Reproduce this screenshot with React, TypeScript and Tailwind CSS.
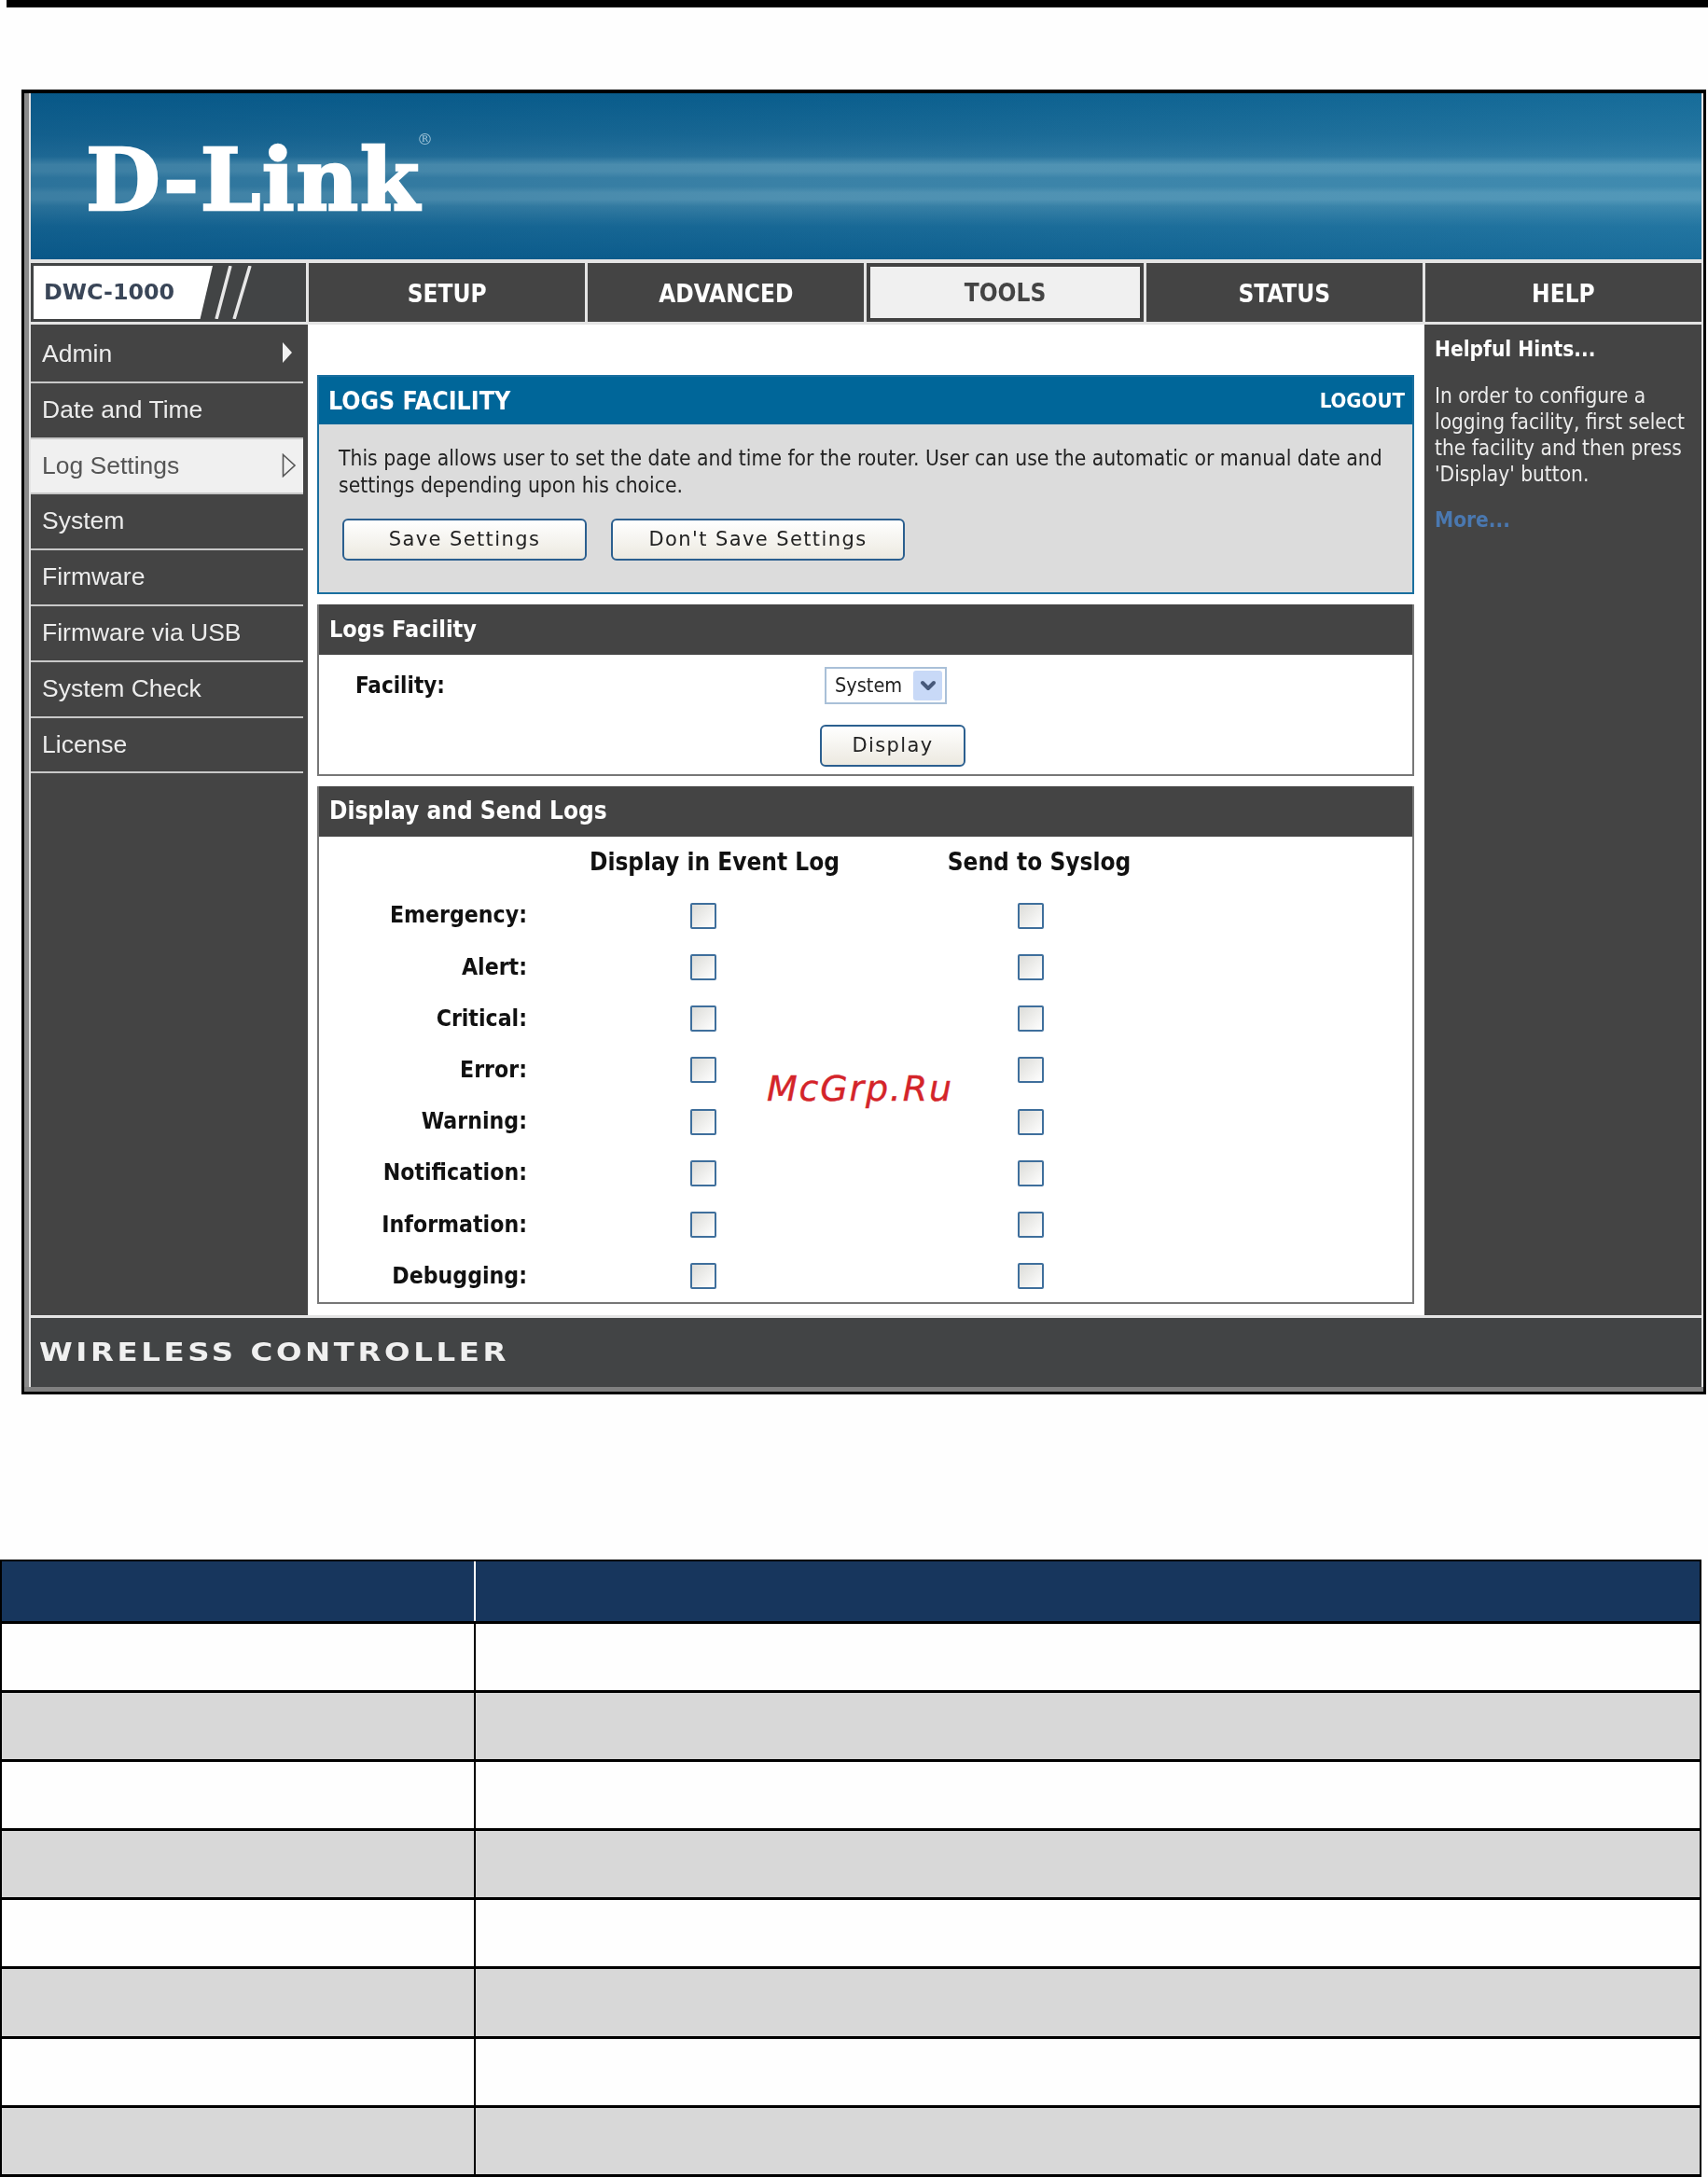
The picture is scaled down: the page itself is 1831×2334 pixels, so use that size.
import { ChevronDown } from 'lucide-react';

const sideItems = ['Admin', 'Date and Time', 'Log Settings', 'System', 'Firmware', 'Firmware via USB', 'System Check', 'License'];
const navItems = ['SETUP', 'ADVANCED', 'TOOLS', 'STATUS', 'HELP'];
const levels = ['Emergency:', 'Alert:', 'Critical:', 'Error:', 'Warning:', 'Notification:', 'Information:', 'Debugging:'];
const tableRows = [0, 1, 2, 3, 4, 5, 6, 7];

function Checkbox() {
  return <span className="block w-[28px] h-[28px] rounded-[2px] border-2 border-[#3f6f9c] bg-[linear-gradient(135deg,#dcdcd8,#ffffff)]" />;
}

function PageButton({ label, width }: { label: string; width: string }) {
  return (
    <button className={`${width} h-[45px] pt-[1px] rounded-[6px] border-2 border-[#2b5f8f] bg-[linear-gradient(180deg,#ffffff,#ece9e0)] font-['DejaVu_Sans',sans-serif] text-[21px] tracking-[1.4px] text-[#222]`}>
      {label}
    </button>
  );
}

function SectionHeader({ title, size }: { title: string; size: string }) {
  return (
    <div className={`h-[54px] flex items-center pl-[11px] bg-[#444444] text-white font-bold ${size}`}>
      {title}
    </div>
  );
}

export default function App() {
  return (
    <div className="relative w-[1831px] h-[2334px] overflow-hidden bg-[#fefefe] font-['DejaVu_Sans_Condensed','DejaVu_Sans',sans-serif]">
      <div className="ml-[7px] h-[8px] bg-black" />

      {/* router screenshot */}
      <div className="mt-[88px] ml-[23px] w-[1806px] h-[1399px] flex flex-col border-t-4 border-x-[3px] border-b-[3px] border-black bg-[#d6d6d6]">
        <div className="flex-1 flex flex-col border-l-[5px] border-[#8a8a8a] pl-[2px] pr-[2px] bg-[#e4e4e4] blur-[0.5px]">
          <div className="relative h-[178px] shrink-0 bg-[linear-gradient(90deg,rgba(0,70,120,.3)_0%,rgba(0,70,120,.08)_45%,rgba(70,160,200,.2)_100%),linear-gradient(180deg,#0a5f8e_0%,#1a6a96_25%,#2a769f_38%,#5596b5_43%,#5596b5_47%,#3f86aa_51%,#3f86aa_56%,#5596b5_60%,#5596b5_64%,#3a82a7_68%,#1a6b98_80%,#0d5f8f_100%)]">
            <div className="absolute left-[59px] top-[37px] flex items-start text-white font-['DejaVu_Serif',serif] font-bold text-[92px] leading-[112px] tracking-[1.5px] [-webkit-text-stroke:2.5px_white]">
              D-Link
              <span className="mt-[2px] -ml-[4px] text-[17px] leading-[20px] font-normal text-[#9fc4d8] [-webkit-text-stroke:0px_white]">®</span>
            </div>
          </div>

          <div className="h-[63px] mt-[4px] shrink-0 flex gap-[3px]">
            <div className="relative w-[295px] bg-[#424445] p-[3px]">
              <div className="w-[192px] h-[57px] flex items-center pl-[11px] bg-white [clip-path:polygon(0_0,100%_0,93%_100%,0_100%)] font-['DejaVu_Sans',sans-serif] font-bold text-[23.8px] text-[#3a4658]">
                DWC-1000
              </div>
              <svg className="absolute left-[190px] top-[3px]" width="50" height="57" viewBox="0 0 50 57">
                <path d="M24 0 L9 57 M45 0 L28 57" stroke="#e8e8e8" strokeWidth="3.5" fill="none" />
              </svg>
            </div>
            {navItems.map((item) =>
              item === 'TOOLS' ? (
                <div key={item} className="flex-1 flex bg-[#424242]">
                  <div className="flex-1 m-[4px] pt-[1px] flex items-center justify-center bg-[#f0f0f0] font-bold text-[26px] text-[#444]">{item}</div>
                </div>
              ) : (
                <div key={item} className="flex-1 pt-[3px] flex items-center justify-center bg-[#444444] font-bold text-[26px] text-white">
                  {item}
                </div>
              ),
            )}
          </div>

          <div className="h-[1062px] mt-[3px] shrink-0 flex">
            <aside className="w-[297px] shrink-0 bg-[#444444] font-['Liberation_Sans',sans-serif] text-[26.5px]">
              <div className="w-[292px] pt-[3px]">
                {sideItems.map((item) => (
                  <div
                    key={item}
                    className={`relative h-[59.8px] flex items-center pl-[12px] border-b-2 border-[#c8c8c8] ${item === 'Log Settings' ? 'bg-[#f0f0f0] text-[#555]' : 'text-[#ececec]'}`}
                  >
                    {item}
                    {item === 'Admin' && (
                      <svg className="absolute left-[270px] top-[16px]" width="10" height="22" viewBox="0 0 10 22">
                        <path d="M0 0 L10 11 L0 22 Z" fill="#f2f2f2" />
                      </svg>
                    )}
                    {item === 'Log Settings' && (
                      <svg className="absolute left-[269px] top-[15px]" width="16" height="26" viewBox="0 0 16 26">
                        <path d="M1.5 1.5 L14 13 L1.5 24.5 Z" fill="none" stroke="#555" strokeWidth="1.6" />
                      </svg>
                    )}
                  </div>
                ))}
              </div>
            </aside>

            <main className="w-[1197px] shrink-0 bg-white pt-[54px] pl-[10px] pr-[11px] flex flex-col gap-[11px]">
              <section className="h-[235px] flex flex-col border-2 border-[#1a6f9f] bg-[#dcdcdc]">
                <div className="h-[51px] flex items-center justify-between pl-[10px] pr-[8px] bg-[#006699] text-white font-bold">
                  <span className="text-[26.5px]">LOGS FACILITY</span>
                  <span className="text-[22px]">LOGOUT</span>
                </div>
                <p className="pt-[22px] pl-[21px] text-[22.7px] leading-[29px] text-[#222]">
                  This page allows user to set the date and time for the router. User can use the automatic or manual date and
                  <br />
                  settings depending upon his choice.
                </p>
                <div className="mt-[21px] ml-[25px] flex gap-[26px]">
                  <PageButton label="Save Settings" width="w-[262px]" />
                  <PageButton label="Don't Save Settings" width="w-[315px]" />
                </div>
              </section>

              <section className="h-[184px] flex flex-col border-2 border-t-0 border-[#777]">
                <SectionHeader title="Logs Facility" size="text-[25px]" />
                <div className="flex items-center pt-[13px] pl-[39px]">
                  <span className="w-[503px] font-bold text-[24px] text-[#111]">Facility:</span>
                  <div className="relative w-[131px] h-[40px] flex items-center pl-[9px] border-2 border-[#a9c0d8] bg-white text-[21.5px] text-[#222]">
                    System
                    <span className="absolute right-[3px] top-[2px] w-[31px] h-[32px] flex items-center justify-center rounded-[3px] bg-[#c8d9f7]">
                      <ChevronDown size={24} strokeWidth={4} className="text-[#47597a]" />
                    </span>
                  </div>
                </div>
                <div className="mt-[22px] ml-[537px]">
                  <PageButton label="Display" width="w-[156px]" />
                </div>
              </section>

              <section className="h-[555px] flex flex-col border-2 border-t-0 border-[#777]">
                <SectionHeader title="Display and Send Logs" size="text-[26px]" />
                <div className="h-[58px] pb-[1px] grid grid-cols-[223px_378px_324px] items-center font-bold text-[26px] text-[#111]">
                  <span />
                  <span className="pl-[24px] text-center">Display in Event Log</span>
                  <span className="pl-[18px] text-center">Send to Syslog</span>
                </div>
                {levels.map((level) => (
                  <div key={level} className="h-[55.7px] grid grid-cols-[223px_378px_324px] items-center font-bold text-[24.6px] text-[#111]">
                    <span className="text-right">{level}</span>
                    <span className="flex justify-center"><Checkbox /></span>
                    <span className="flex justify-center"><Checkbox /></span>
                  </div>
                ))}
              </section>
            </main>

            <aside className="flex-1 bg-[#444444] pl-[11px] pt-[12px] text-[#ececec]">
              <h3 className="font-bold text-[22.5px] leading-[28px] text-white">Helpful Hints...</h3>
              <p className="mt-[22px] text-[22.5px] leading-[28px]">
                In order to configure a
                <br />
                logging facility, first select
                <br />
                the facility and then press
                <br />
                'Display' button.
              </p>
              <p className="mt-[21px] font-bold text-[22.5px] leading-[28px] text-[#4a78b0]">More...</p>
            </aside>
          </div>

          <div className="h-[74px] mt-[3px] shrink-0 flex items-center pl-[9px] bg-[#424445] font-['DejaVu_Sans',sans-serif] font-bold text-[27px] tracking-[3px] text-[#f0f0f0]">
            <span className="inline-block origin-left scale-x-[1.2]">WIRELESS CONTROLLER</span>
          </div>
        </div>
        <div className="h-[5px] shrink-0 bg-[#808080]" />
      </div>

      {/* watermark over the screenshot */}
      <span className="absolute left-[822px] top-[1139px] font-['DejaVu_Sans',sans-serif] italic text-[38px] leading-[56px] tracking-[1.8px] text-[#d4242a] [-webkit-text-stroke:0.4px_#d4242a]">
        McGrp.Ru
      </span>

      {/* empty description table */}
      <div className="mt-[177px] w-[1824px] border-t-2 border-x-2 border-black">
        <div className="h-[67px] flex border-b-[3px] border-black bg-[#17365d]">
          <div className="w-[508px] border-r-2 border-white" />
        </div>
        {tableRows.map((row) => (
          <div key={row} className={`h-[74.1px] flex border-b-[3px] border-black ${row % 2 === 1 ? 'bg-[#d8d8d8]' : 'bg-[#fefefe]'}`}>
            <div className="w-[508px] border-r-2 border-black" />
          </div>
        ))}
      </div>
    </div>
  );
}
